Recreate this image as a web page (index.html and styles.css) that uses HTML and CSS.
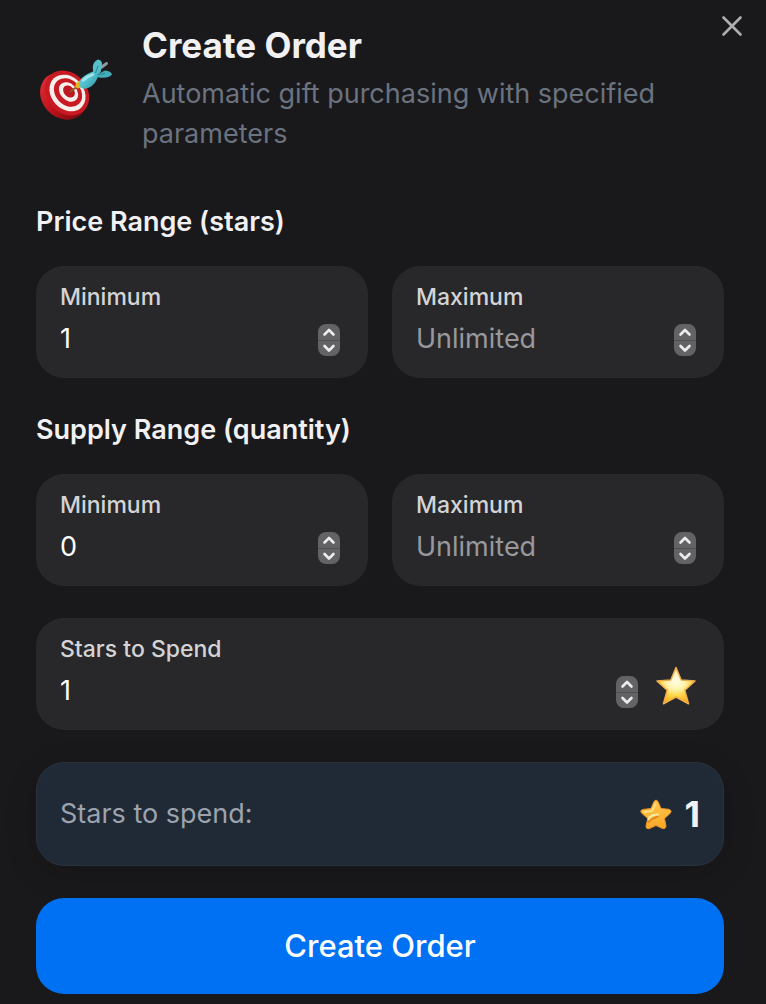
FILE: index.html
```html
<!DOCTYPE html>
<html lang="en">
<head>
    <meta charset="UTF-8">
    <meta name="viewport" content="width=device-width, initial-scale=1.0">
    <title>Create Order</title>
    <link rel="stylesheet" href="styles.css">
</head>
<body>
    <!-- shared shapes -->
    <svg class="sprite" aria-hidden="true">
        <symbol id="chevron-up" viewBox="0 0 22 16"><path d="M6.5 10.500 11 6 15.500 10.500" fill="none" stroke="#ececee" stroke-width="2.6" stroke-linecap="round" stroke-linejoin="round"/></symbol>
        <symbol id="chevron-down" viewBox="0 0 22 16"><path d="M6.5 5 11 9.500 15.500 5" fill="none" stroke="#ececee" stroke-width="2.6" stroke-linecap="round" stroke-linejoin="round"/></symbol>
    </svg>

    <main class="modal">
        <button class="close" type="button" aria-label="Close">
            <svg viewBox="0 0 20 20" width="20" height="20"><path d="M1.500 1.500 18.500 18.500M18.500 1.500 1.500 18.500" stroke="#adadb0" stroke-width="2.6" stroke-linecap="round"/></svg>
        </button>

        <header class="header">
            <svg class="header-icon" viewBox="0 0 78 66" aria-hidden="true">
                <defs>
                    <linearGradient id="rim" x1="0" y1="0" x2="0" y2="1">
                        <stop offset="0" stop-color="#dc2a31"/>
                        <stop offset=".6" stop-color="#b8121b"/>
                        <stop offset="1" stop-color="#7d0b11"/>
                    </linearGradient>
                    <linearGradient id="dart" x1="0" y1="0" x2="1" y2="1">
                        <stop offset="0" stop-color="#8fe0e6"/>
                        <stop offset=".5" stop-color="#52c0cd"/>
                        <stop offset="1" stop-color="#2a8a99"/>
                    </linearGradient>
                </defs>
                <ellipse cx="27.500" cy="40" rx="21.500" ry="25.500" transform="rotate(-43 27.500 40)" fill="url(#rim)"/>
                <ellipse cx="31" cy="37" rx="20" ry="24.500" transform="rotate(-43 31 37)" fill="#c91923"/>
                <ellipse cx="31.500" cy="37" rx="16.200" ry="20" transform="rotate(-43 31.500 37)" fill="#f6efeb"/>
                <ellipse cx="32" cy="36.500" rx="12.400" ry="15.800" transform="rotate(-43 32 36.500)" fill="#c91923"/>
                <ellipse cx="32.500" cy="36" rx="8.200" ry="11" transform="rotate(-43 32.500 36)" fill="#f6efeb"/>
                <ellipse cx="33" cy="35.500" rx="5" ry="6.800" transform="rotate(-43 33 35.500)" fill="#bd1822"/>
                <path d="M34.500 35.500 42 30" stroke="#8a5a20" stroke-width="2" stroke-linecap="round"/>
                <path d="M39 31 40 27 44 24.500 46.500 31 42 32.500Z" fill="#e3b51f"/>
                <path d="M63 13 70.500 7.500" stroke="#8d989c" stroke-width="3" stroke-linecap="round"/>
                <path d="M57.500 16C55.500 10 58 5 62 3.500Q66 4 66 8L64.500 16Z" fill="#56bfca"/>
                <path d="M62 18 69 14.500Q75 15 76 18.500C73 22.500 65 22.500 60 20.500Z" fill="#43adba"/>
                <path d="M43 27Q44.500 21.500 51.500 18L58 15 65.500 10 65 14.500 62.500 20 60.500 24Q57 31.500 49 32.700 43 33 43 27Z" fill="url(#dart)"/>
                <path d="M47 24.500Q51 20.500 57 18.500" fill="none" stroke="#9fe6eb" stroke-width="2.500" stroke-linecap="round"/>
                <path d="M59.500 17 62 10M61.500 18.500 69 17.500" stroke="#2a8291" stroke-width="1"/>
            </svg>
            <div class="header-text">
                <h1>Create Order</h1>
                <p>Automatic gift purchasing with specified parameters</p>
            </div>
        </header>

        <form class="form">
            <section class="range">
                <h2>Price Range (stars)</h2>
                <div class="range-fields">
                    <div class="field">
                        <div class="field-main">
                            <label for="priceMin">Minimum</label>
                            <input type="number" id="priceMin" value="1" min="1">
                        </div>
                        <div class="stepper">
                            <button type="button" data-step="1" aria-label="Increase"><svg><use href="#chevron-up"/></svg></button>
                            <button type="button" data-step="-1" aria-label="Decrease"><svg><use href="#chevron-down"/></svg></button>
                        </div>
                    </div>
                    <div class="field">
                        <div class="field-main">
                            <label for="priceMax">Maximum</label>
                            <input type="number" id="priceMax" placeholder="Unlimited" min="1">
                        </div>
                        <div class="stepper">
                            <button type="button" data-step="1" aria-label="Increase"><svg><use href="#chevron-up"/></svg></button>
                            <button type="button" data-step="-1" aria-label="Decrease"><svg><use href="#chevron-down"/></svg></button>
                        </div>
                    </div>
                </div>
            </section>

            <section class="range">
                <h2>Supply Range (quantity)</h2>
                <div class="range-fields">
                    <div class="field">
                        <div class="field-main">
                            <label for="supplyMin">Minimum</label>
                            <input type="number" id="supplyMin" value="0" min="0">
                        </div>
                        <div class="stepper">
                            <button type="button" data-step="1" aria-label="Increase"><svg><use href="#chevron-up"/></svg></button>
                            <button type="button" data-step="-1" aria-label="Decrease"><svg><use href="#chevron-down"/></svg></button>
                        </div>
                    </div>
                    <div class="field">
                        <div class="field-main">
                            <label for="supplyMax">Maximum</label>
                            <input type="number" id="supplyMax" placeholder="Unlimited" min="0">
                        </div>
                        <div class="stepper">
                            <button type="button" data-step="1" aria-label="Increase"><svg><use href="#chevron-up"/></svg></button>
                            <button type="button" data-step="-1" aria-label="Decrease"><svg><use href="#chevron-down"/></svg></button>
                        </div>
                    </div>
                </div>
            </section>

            <div class="field">
                <div class="field-main">
                    <label for="spend">Stars to Spend</label>
                    <input type="number" id="spend" value="1" min="1">
                </div>
                <div class="stepper">
                    <button type="button" data-step="1" aria-label="Increase"><svg><use href="#chevron-up"/></svg></button>
                    <button type="button" data-step="-1" aria-label="Decrease"><svg><use href="#chevron-down"/></svg></button>
                </div>
                <svg class="field-star" viewBox="0 0 40 40" aria-hidden="true">
                    <defs>
                        <radialGradient id="glow" cx=".5" cy=".36" r=".66">
                            <stop offset="0" stop-color="#fffde9"/>
                            <stop offset=".35" stop-color="#fff5b5"/>
                            <stop offset=".65" stop-color="#fdd443"/>
                            <stop offset="1" stop-color="#f7a81a"/>
                        </radialGradient>
                    </defs>
                    <path d="M20 1.500 25.200 14 39 15 28.800 24.200 32.500 37.800 20 31 7.500 37.800 11.200 24.200 1 15 14.800 14Z" fill="url(#glow)" stroke="#eeb04e" stroke-width="1.500" stroke-linejoin="round"/>
                </svg>
            </div>

            <div class="total">
                <span class="total-label">Stars to spend:</span>
                <span class="total-value">
                    <svg class="total-star" viewBox="0 0 32 32" aria-hidden="true">
                        <defs>
                            <linearGradient id="gold" x1="0" y1="0" x2="0" y2="1">
                                <stop offset="0" stop-color="#ffc84a"/>
                                <stop offset="1" stop-color="#fba627"/>
                            </linearGradient>
                        </defs>
                        <path d="M14 3.500Q16 .5 18 3.500L21 10.500 29 11.300Q32.500 12.500 30.500 15L24.500 20.500 26 28Q25.500 31.500 22.500 30.500L16 27.500 9 30.800Q5.500 31 6 28L7.800 20.500 1.500 15Q-.5 12.500 2.500 11.500L11 10.500Z" fill="url(#gold)" stroke="#e8912a" stroke-width="1" stroke-linejoin="round"/>
                        <path d="M4 14 12 13 15.500 6" fill="none" stroke="#ffe089" stroke-width="1.800" stroke-linecap="round" stroke-linejoin="round"/>
                        <path d="M8.500 21Q10.500 16.500 18 16.500" fill="none" stroke="#ffeba8" stroke-width="2" stroke-linecap="round"/>
                        <path d="M8.500 24Q12 20.500 18 18.500" fill="none" stroke="#d9801f" stroke-width="1.500" stroke-linecap="round"/>
                    </svg>
                    <output id="total" for="spend">1</output>
                </span>
            </div>

            <button class="submit" type="submit">Create Order</button>
        </form>
    </main>

    <script>
        const spend = document.getElementById('spend');
        const total = document.getElementById('total');

        function updateTotal() {
            total.textContent = spend.value || 0;
        }

        document.querySelectorAll('.stepper button').forEach((button) => {
            button.addEventListener('click', () => {
                const input = button.closest('.field').querySelector('input');
                if (button.dataset.step === '1') {
                    input.stepUp();
                } else {
                    input.stepDown();
                }
                updateTotal();
            });
        });

        spend.addEventListener('input', updateTotal);
        document.querySelector('.form').addEventListener('submit', (event) => event.preventDefault());
    </script>
</body>
</html>
```

FILE: styles.css
```css
* {
    box-sizing: border-box;
}
body {
    margin: 0;
    background-color: #19191b;
    color: #f1f1f3;
    font-family: Inter, 'Liberation Sans', sans-serif;
    font-size: 27px;
    line-height: 40px;
}
h1, h2, p {
    margin: 0;
}
button, input {
    font: inherit;
    color: inherit;
    border: none;
    margin: 0;
    padding: 0;
    background: none;
}
button {
    cursor: pointer;
}
.sprite {
    display: none;
}
.modal {
    position: relative;
    padding: 24px 42px 10px 36px;
}
.close {
    position: absolute;
    top: 16px;
    right: 24px;
    width: 20px;
    height: 20px;
}
.close svg {
    display: block;
}
.header {
    display: flex;
    align-items: center;
    gap: 28px;
    margin-bottom: 48px;
}
.header-icon {
    flex: none;
    width: 78px;
    height: 66px;
}
h1 {
    margin-bottom: 8px;
    font-size: 35px;
    font-weight: 700;
    line-height: 42px;
}
.header-text p {
    color: #6b7280;
}
.form {
    display: flex;
    flex-direction: column;
    gap: 32px;
}
h2 {
    margin-bottom: 24px;
    font-size: 27px;
    font-weight: 600;
}
.range-fields {
    display: grid;
    grid-template-columns: 1fr 1fr;
    gap: 24px;
}
.field {
    display: flex;
    align-items: flex-end;
    gap: 18px;
    padding: 15px 28px 19px 24px;
    background-color: #28282a;
    border-radius: 28px;
}
.field-main {
    flex: 1;
    min-width: 0;
}
.field label {
    display: block;
    margin-bottom: 6px;
    color: #d4d4d6;
    font-size: 23px;
    font-weight: 500;
    line-height: 32px;
}
.field input {
    display: block;
    width: 100%;
    height: 40px;
    color: #fff;
    outline: none;
    appearance: textfield;
}
.field input::-webkit-inner-spin-button {
    appearance: none;
    margin: 0;
}
.field input::placeholder {
    color: #98989d;
    opacity: 1;
}
.stepper {
    display: flex;
    flex-direction: column;
    width: 22px;
    height: 32px;
    margin-bottom: 3px;
    overflow: hidden;
    background-color: #636365;
    border-radius: 8px;
}
.stepper button {
    flex: 1;
    height: 16px;
}
.stepper button + button {
    border-top: 1px solid #505052;
}
.stepper svg {
    display: block;
    width: 22px;
    height: 16px;
}
.field-star {
    width: 40px;
    height: 40px;
    margin-bottom: 5px;
}
.total {
    display: flex;
    align-items: center;
    justify-content: space-between;
    height: 104px;
    padding: 0 23px;
    background-color: #202936;
    border: 1px solid #2a323e;
    border-radius: 28px;
    box-shadow: 0 8px 32px rgba(0, 0, 0, 0.15);
}
.total-label {
    color: #9ca3af;
}
.total-value {
    display: flex;
    align-items: center;
    gap: 12px;
    font-size: 36px;
    font-weight: 700;
}
.total-star {
    width: 32px;
    height: 32px;
}
.submit {
    height: 96px;
    background-color: #0071f2;
    border-radius: 28px;
    color: #fff;
    font-size: 31px;
    font-weight: 500;
}
```
